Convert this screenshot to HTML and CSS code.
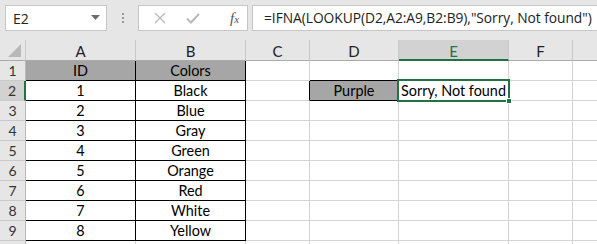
FILE: index.html
```html
<!DOCTYPE html>
<html>
<head>
<meta charset="utf-8">
<link rel="stylesheet" href="styles.css">
</head>
<body>
<div class="toolbar">
  <div class="namebox">
    <span class="name">E2</span>
    <svg class="drop" width="9" height="5" viewBox="0 0 9 5"><path d="M0 0 H9 L4.5 5 Z" fill="#6d6d6d"/></svg>
  </div>
  <div class="dots"><i></i><i></i><i></i></div>
  <div class="fxbox">
    <svg width="12" height="12" viewBox="0 0 12 12"><path d="M1 1 L11 11 M11 1 L1 11" stroke="#b9b9b9" stroke-width="1.3" fill="none"/></svg>
    <svg width="14" height="11" viewBox="0 0 14 11"><path d="M1 5.5 L5 9.5 L13 1" stroke="#b9b9b9" stroke-width="2" fill="none"/></svg>
    <span class="fx">f<sub>x</sub></span>
  </div>
  <div class="formula">=IFNA(LOOKUP(D2,A2:A9,B2:B9),"Sorry, Not found")</div>
</div>
<div class="sheet">
  <div class="hd corner"><svg width="13" height="13" viewBox="0 0 13 13"><path d="M13 0 V13 H0 Z" fill="#b8b8b8"/></svg></div>
  <div class="hd col">A</div>
  <div class="hd col">B</div>
  <div class="hd col">C</div>
  <div class="hd col">D</div>
  <div class="hd col sel">E</div>
  <div class="hd col">F</div>
  <div class="hd col last"></div>

  <div class="hd row">1</div>
  <div class="c t fill">ID</div><div class="c t fill">Colors</div><div class="c"></div><div class="c bb"></div><div class="c"></div><div class="c"></div><div class="c last"></div>

  <div class="hd row rsel">2</div>
  <div class="c t">1</div><div class="c t">Black</div><div class="c br"></div><div class="c t fill">Purple</div><div class="c active"><span class="txt">Sorry, Not found</span><div class="selbox"><i class="handle"></i></div></div><div class="c"></div><div class="c last"></div>

  <div class="hd row">3</div>
  <div class="c t">2</div><div class="c t">Blue</div><div class="c"></div><div class="c"></div><div class="c"></div><div class="c"></div><div class="c last"></div>

  <div class="hd row">4</div>
  <div class="c t">3</div><div class="c t">Gray</div><div class="c"></div><div class="c"></div><div class="c"></div><div class="c"></div><div class="c last"></div>

  <div class="hd row">5</div>
  <div class="c t">4</div><div class="c t">Green</div><div class="c"></div><div class="c"></div><div class="c"></div><div class="c"></div><div class="c last"></div>

  <div class="hd row">6</div>
  <div class="c t">5</div><div class="c t">Orange</div><div class="c"></div><div class="c"></div><div class="c"></div><div class="c"></div><div class="c last"></div>

  <div class="hd row">7</div>
  <div class="c t">6</div><div class="c t">Red</div><div class="c"></div><div class="c"></div><div class="c"></div><div class="c"></div><div class="c last"></div>

  <div class="hd row">8</div>
  <div class="c t">7</div><div class="c t">White</div><div class="c"></div><div class="c"></div><div class="c"></div><div class="c"></div><div class="c last"></div>

  <div class="hd row">9</div>
  <div class="c t">8</div><div class="c t">Yellow</div><div class="c"></div><div class="c"></div><div class="c"></div><div class="c"></div><div class="c last"></div>

  <div class="hd row"></div>
  <div class="c"></div><div class="c"></div><div class="c"></div><div class="c"></div><div class="c"></div><div class="c"></div><div class="c last"></div>
</div>
</body>
</html>
```

FILE: styles.css
```css
* { box-sizing: border-box; }
html, body { margin: 0; padding: 0; background: #ffffff; }
body { width: 597px; height: 244px; overflow: hidden; font-family: Lato, "Liberation Sans", sans-serif; }

.toolbar {
  height: 40px;
  background: #e6e6e6;
  display: flex;
  align-items: flex-start;
  padding-top: 5px;
  padding-left: 5px;
}
.namebox {
  width: 102px;
  height: 26px;
  background: #fff;
  border: 1px solid #c6c6c6;
  display: flex;
  align-items: center;
  justify-content: space-between;
  padding: 0 6px 0 7px;
  font-family: "Open Sans", "Liberation Sans", sans-serif;
  font-size: 14px;
  color: #222;
}
.drop { margin-top: -2px; }
.dots {
  width: 31px;
  height: 26px;
  display: flex;
  flex-direction: column;
  align-items: center;
  justify-content: center;
  gap: 2px;
}
.dots i { display: block; width: 2px; height: 2px; background: #9a9a9a; }
.fxbox {
  width: 110px;
  height: 26px;
  background: #fff;
  border: 1px solid #c6c6c6;
  display: flex;
  align-items: center;
  padding-left: 15px;
  gap: 20px;
}
.fx {
  font-family: "Liberation Serif", serif;
  font-style: italic;
  font-size: 15px;
  color: #555;
  margin-left: 10px;
}
.fx sub { font-size: 11px; vertical-align: 0; }
.formula {
  flex: 1;
  height: 26px;
  margin-left: 4px;
  background: #fff;
  border: 1px solid #c6c6c6;
  border-right: 0;
  font-family: "Open Sans", "Liberation Sans", sans-serif;
  font-size: 13.8px;
  letter-spacing: -0.05px;
  color: #222;
  padding-left: 11px;
  line-height: 24px;
  white-space: nowrap;
}

.sheet {
  display: grid;
  grid-template-columns: 26px 110px 110px 64px 89px 110px 64px 24px;
  grid-template-rows: 21px repeat(9, 20px) 20px;
  font-size: 14.4px;
}
.hd {
  background: #e6e6e6;
  color: #222;
  display: flex;
  align-items: center;
  justify-content: center;
  border-right: 1px solid #c9c9c9;
  border-bottom: 1px solid #c9c9c9;
}
.hd.col { border-bottom-color: #ababab; padding-top: 2px; font-size: 15px; }
.hd.col.last { border-right: 0; }
.hd.corner { border-bottom-color: #ababab; border-right-color: #c9c9c9; justify-content: flex-end; align-items: flex-end; padding: 0 4px 3px 0; }
.hd.sel { background: #d2d2d2; color: #217346; border-bottom: 2px solid #217346; }
.hd.row { border-right-color: #b8b8b8; border-bottom-color: #c9c9c9; font-size: 14px; color: #333; }
.hd.rsel { background: #d2d2d2; border-right: 2px solid #217346; }

.c {
  border-right: 1px solid #d4d4d4;
  border-bottom: 1px solid #d4d4d4;
  display: flex;
  align-items: center;
  justify-content: center;
  color: #000;
  white-space: nowrap;
  line-height: 1;
  padding-top: 1px;
}
.c.last { border-right: 0; }
.c.t { border-right-color: #000; border-bottom-color: #000; }
.c.fill { background: #a6a6a6; }
.c.bb { border-bottom-color: #000; }
.c.br { border-right-color: #000; }
.active { position: relative; justify-content: flex-start; padding-left: 2px; }
.selbox {
  position: absolute;
  left: -2px;
  top: -2px;
  right: -2px;
  bottom: -2px;
  border: 2px solid #217346;
}
.handle {
  position: absolute;
  right: -4px;
  bottom: -4px;
  width: 6px;
  height: 6px;
  background: #217346;
  border: 1px solid #fff;
}
```
